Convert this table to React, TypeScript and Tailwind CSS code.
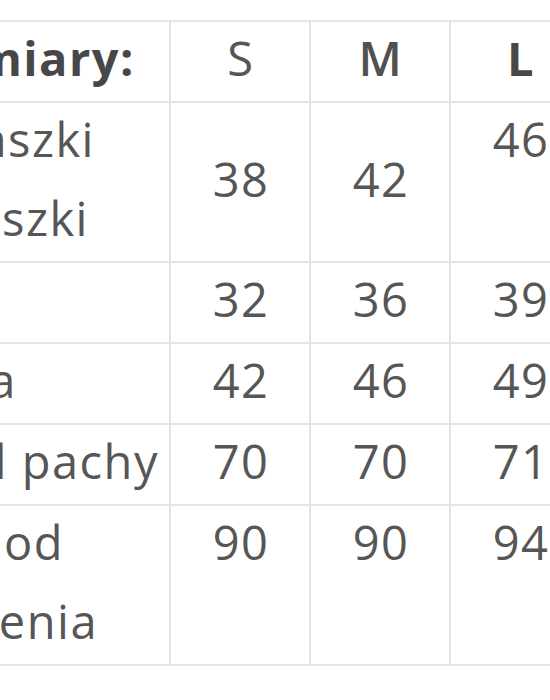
import React from "react"

type Cell = {
  value: string
  align?: "top" | "middle"
}

type Row = {
  label: { text: string; pr: string }[]
  cells: Cell[]
}

const rows: Row[] = [
  {
    label: [
      { text: "Szerokość od paszki", pr: "pr-[74px]" },
      { text: "do paszki", pr: "pr-[80px]" },
    ],
    cells: [{ value: "38" }, { value: "42" }, { value: "46", align: "top" }],
  },
  {
    label: [{ text: "Pas", pr: "pr-[200px]" }],
    cells: [{ value: "32" }, { value: "36" }, { value: "39" }],
  },
  {
    label: [{ text: "Biodra", pr: "pr-[152px]" }],
    cells: [{ value: "42" }, { value: "46" }, { value: "49" }],
  },
  {
    label: [{ text: "Długość od pachy", pr: "pr-[10px]" }],
    cells: [{ value: "70" }, { value: "70" }, { value: "71" }],
  },
  {
    label: [
      { text: "Długość od", pr: "pr-[105px]" },
      { text: "ramienia", pr: "pr-[71px]" },
    ],
    cells: [
      { value: "90", align: "top" },
      { value: "90", align: "top" },
      { value: "94", align: "top" },
    ],
  },
]

const border = "border-2 border-[#e4e4e4]"
// line box of 79px, with the baseline lifted a little
const line = "leading-[73px] pb-[6px]"

export default function App() {
  return (
    <div
      className="w-[550px] h-[700px] overflow-hidden bg-white pt-[20px] text-[47px] tracking-[1.5px] text-[#565656]"
      style={{ fontFamily: '"Open Sans", "Noto Sans", sans-serif' }}
    >
      <table className="table-fixed border-collapse w-[590px]">
        <colgroup>
          <col className="w-[170px]" />
          <col className="w-[140px]" />
          <col className="w-[140px]" />
          <col className="w-[140px]" />
        </colgroup>
        <thead>
          <tr>
            <th className={`${border} border-l-0 p-0 font-bold text-[#474747]`}>
              <div className={`flex w-full justify-end overflow-hidden whitespace-nowrap pr-[34px] ${line}`}>
                Wymiary:
              </div>
            </th>
            <th className={`${border} px-0 pt-0 pl-[2px] text-center font-normal ${line}`}>S</th>
            <th className={`${border} px-0 pt-0 pl-[2px] text-center font-semibold text-[#505050] ${line}`}>M</th>
            <th className={`${border} px-0 pt-0 pl-[2px] text-center font-bold text-[#474747] ${line}`}>L</th>
          </tr>
        </thead>
        <tbody>
          {rows.map((row, i) => (
            <tr key={i}>
              <td className={`${border} border-l-0 p-0 align-top`}>
                {row.label.map((l, j) => (
                  <div
                    key={j}
                    className={`flex w-full justify-end overflow-hidden whitespace-nowrap ${l.pr} ${line}`}
                  >
                    {l.text}
                  </div>
                ))}
              </td>
              {row.cells.map((cell, k) => (
                <td
                  key={k}
                  className={`${border} px-0 pt-0 pl-[2px] text-center ${line} ${
                    cell.align === "top" ? "align-top" : "align-middle"
                  }`}
                >
                  {cell.value}
                </td>
              ))}
            </tr>
          ))}
        </tbody>
      </table>
    </div>
  )
}
